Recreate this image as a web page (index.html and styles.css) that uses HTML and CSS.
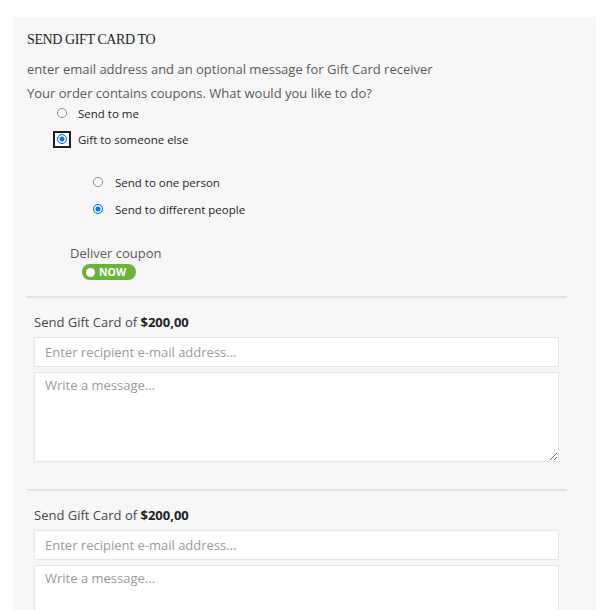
FILE: index.html
```html
<!DOCTYPE html>
<html lang="en">
<head>
<meta charset="utf-8">
<title>Send Gift Card</title>
<link rel="stylesheet" href="styles.css">
</head>
<body>
<div class="panel">
  <h3 class="title">SEND GIFT CARD TO</h3>
  <p class="desc">enter email address and an optional message for Gift Card receiver</p>
  <p class="desc desc-2">Your order contains coupons. What would you like to do?</p>
  <ul class="choices">
    <li class="choice"><span class="radio"></span><span class="label">Send to me</span></li>
    <li class="choice focus-row"><span class="focus-box"><span class="radio checked"></span></span><span class="label">Gift to someone else</span></li>
  </ul>
  <ul class="choices sub">
    <li class="choice"><span class="radio"></span><span class="label">Send to one person</span></li>
    <li class="choice"><span class="radio checked"></span><span class="label">Send to different people</span></li>
  </ul>
  <div class="deliver">
    <div class="deliver-label">Deliver coupon</div>
    <div class="toggle"><span class="knob"></span><span class="toggle-text">NOW</span></div>
  </div>
  <div class="recipient">
    <div class="amount">Send Gift Card of <strong>$200,00</strong></div>
    <input class="field" type="text" placeholder="Enter recipient e-mail address...">
    <textarea class="field message" placeholder="Write a message..."></textarea>
  </div>
  <div class="recipient">
    <div class="amount">Send Gift Card of <strong>$200,00</strong></div>
    <input class="field" type="text" placeholder="Enter recipient e-mail address...">
    <textarea class="field message" placeholder="Write a message..."></textarea>
  </div>
</div>
</body>
</html>
```
FILE: styles.css
```css
html, body {
  margin: 0;
  padding: 0;
  background: #ffffff;
}
body {
  font-family: "Open Sans", "Liberation Sans", sans-serif;
  font-size: 13px;
  color: #5a5a5a;
  overflow: hidden;
  height: 610px;
}
.panel {
  margin: 17px 14px 0;
  background: #f7f7f7;
  padding: 13px 29px 40px 13px;
}
.title {
  margin: 0;
  font-family: "Liberation Serif", "Times New Roman", serif;
  font-weight: normal;
  font-size: 14px;
  letter-spacing: -0.4px;
  line-height: 20px;
  color: #1f1f1f;
}
.desc {
  margin: 9px 0 0;
  line-height: 20px;
}
.desc-2 {
  margin-top: 4px;
}
.choices {
  list-style: none;
  margin: 0;
  padding: 0 0 0 30px;
  display: flex;
  flex-direction: column;
  gap: 6px;
}
.choices.sub {
  margin-top: 23px;
  padding-left: 66px;
  gap: 7px;
}
.choice {
  display: flex;
  align-items: center;
  height: 20px;
}
.radio {
  width: 10px;
  height: 10px;
  box-sizing: border-box;
  border-radius: 50%;
  border: 1px solid #8a8a8a;
  background: #ffffff;
  flex: none;
}
.radio.checked {
  border-color: #0b75f0;
  background: #0b75f0;
  box-shadow: inset 0 0 0 1.5px #ffffff;
}
.focus-row {
  margin-left: -4px;
}
.focus-box {
  display: flex;
  align-items: center;
  justify-content: center;
  width: 18px;
  height: 17px;
  box-sizing: border-box;
  border: 2px solid #1c1c2a;
  background: #ffffff;
  flex: none;
}
.label {
  margin-left: 11px;
  font-size: 11.5px;
  font-weight: 500;
  color: #1e1e1e;
}
.focus-row .label {
  margin-left: 7px;
}
.sub .label {
  margin-left: 12px;
}
.deliver {
  margin: 24px 0 0 43px;
}
.deliver-label {
  line-height: 20px;
}
.toggle {
  margin: 1px 0 0 12px;
  width: 54px;
  height: 16px;
  border-radius: 8px;
  background: #6bb23c;
  display: flex;
  align-items: center;
  box-sizing: border-box;
  padding-left: 4px;
}
.knob {
  width: 9px;
  height: 9px;
  border-radius: 50%;
  background: #ffffff;
}
.toggle-text {
  margin-left: 4px;
  color: #ffffff;
  font-weight: 700;
  font-size: 10.5px;
  line-height: 16px;
}
.recipient {
  margin-top: 16px;
  border-top: 2px solid #e3e3e3;
  padding: 14px 8px 27px 7px;
  display: flex;
  flex-direction: column;
  gap: 5px;
}
.recipient + .recipient {
  margin-top: 0;
}
.amount {
  line-height: 20px;
  color: #484848;
}
.amount strong {
  color: #222222;
  font-weight: 700;
}
.field {
  display: block;
  box-sizing: border-box;
  width: 100%;
  height: 30px;
  margin: 0;
  border: 1px solid #e7e7e7;
  background: #ffffff;
  padding: 0 10px;
  font-family: "Open Sans", "Liberation Sans", sans-serif;
  font-size: 13px;
  color: #555555;
  outline: none;
}
.field::placeholder {
  color: #9a9a9a;
}
.message {
  height: 90px;
  padding: 3px 10px;
  resize: vertical;
}
```
